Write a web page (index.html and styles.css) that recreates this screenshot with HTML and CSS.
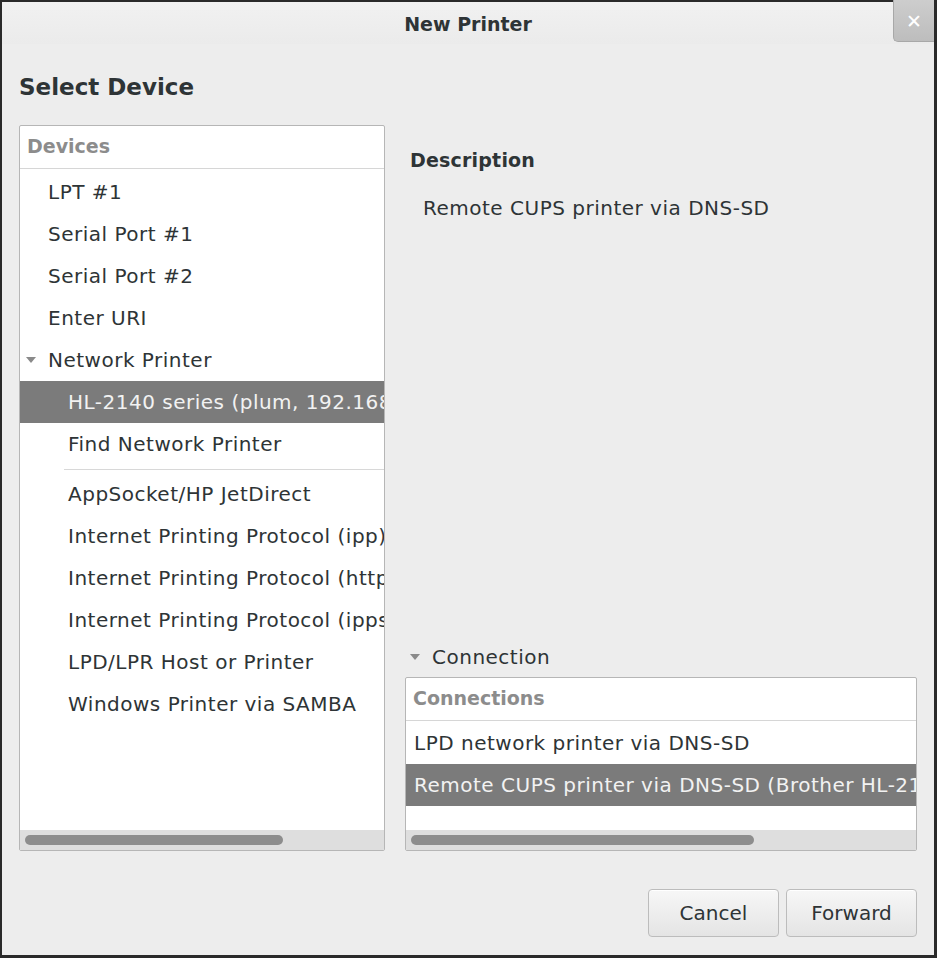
FILE: index.html
```html
<!DOCTYPE html>
<html lang="en">
<head>
    <meta charset="UTF-8">
    <title>New Printer</title>
    <link rel="stylesheet" href="styles.css">
</head>
<body>
    <div class="window">
        <div class="titlebar">
            <span class="title">New Printer</span>
            <div class="close">&#x2715;</div>
        </div>

        <div class="content">
            <h1 class="page-title">Select Device</h1>

            <div class="main">
                <!-- device tree -->
                <div class="listbox devices">
                    <div class="list-head">Devices</div>
                    <div class="list-body">
                        <div class="row">LPT #1</div>
                        <div class="row">Serial Port #1</div>
                        <div class="row">Serial Port #2</div>
                        <div class="row">Enter URI</div>
                        <div class="row parent"><span class="arrow"></span>Network Printer</div>
                        <div class="row child selected">HL-2140 series (plum, 192.168.0.4)</div>
                        <div class="row child">Find Network Printer</div>
                        <div class="separator"></div>
                        <div class="row child">AppSocket/HP JetDirect</div>
                        <div class="row child">Internet Printing Protocol (ipp)</div>
                        <div class="row child">Internet Printing Protocol (https)</div>
                        <div class="row child">Internet Printing Protocol (ipps)</div>
                        <div class="row child">LPD/LPR Host or Printer</div>
                        <div class="row child">Windows Printer via SAMBA</div>
                    </div>
                    <div class="hscroll"><div class="thumb" style="width: 258px"></div></div>
                </div>

                <div class="side">
                    <h2 class="section">Description</h2>
                    <p class="desc">Remote CUPS printer via DNS-SD</p>

                    <div class="spacer"></div>

                    <div class="expander"><span class="arrow"></span>Connection</div>
                    <div class="listbox connections">
                        <div class="list-head">Connections</div>
                        <div class="list-body">
                            <div class="row">LPD network printer via DNS-SD</div>
                            <div class="row selected">Remote CUPS printer via DNS-SD (Brother HL-2140 series)</div>
                        </div>
                        <div class="hscroll"><div class="thumb" style="width: 343px"></div></div>
                    </div>
                </div>
            </div>

            <div class="buttons">
                <button class="btn">Cancel</button>
                <button class="btn">Forward</button>
            </div>
        </div>
    </div>
</body>
</html>
```

FILE: styles.css
```css
* {
    box-sizing: border-box;
}
body {
    margin: 0;
    background: #2a2a2a;
    font-family: "DejaVu Sans", sans-serif;
    color: #2e3436;
}
.window {
    width: 937px;
    height: 958px;
    border: 2px solid #2a2a2a;
    border-width: 2px 3px 3px 2px;
    background: #ededed;
    display: flex;
    flex-direction: column;
}

/* title bar */
.titlebar {
    position: relative;
    height: 42px;
    flex: none;
    display: flex;
    align-items: center;
    justify-content: center;
    background: linear-gradient(#f1f1f1, #ebebeb);
}
.title {
    font-weight: bold;
    font-size: 19px;
    margin-top: 2px;
}
.close {
    position: absolute;
    top: -2px;
    right: 0;
    width: 41px;
    height: 42px;
    background: linear-gradient(#cdcdcd, #bdbdbd);
    border: 1px solid #a8a8a8;
    border-top: none;
    border-right: none;
    border-bottom-left-radius: 5px;
    color: #fff;
    font-weight: bold;
    font-size: 19px;
    display: flex;
    align-items: center;
    justify-content: center;
}

.content {
    flex: 1;
    display: flex;
    flex-direction: column;
    padding: 0 17px 18px 17px;
}
.page-title {
    font-size: 23px;
    font-weight: bold;
    margin: 29px 0 0 0;
    line-height: 28px;
    height: 52px;
}

.main {
    display: flex;
    gap: 20px;
    height: 726px;
}

/* list boxes */
.listbox {
    background: #fff;
    border: 1px solid #b6b6b6;
    border-radius: 2px;
    display: flex;
    flex-direction: column;
    overflow: hidden;
}
.devices {
    width: 366px;
    flex: none;
}
.list-head {
    height: 43px;
    flex: none;
    border-bottom: 1px solid #d6d6d6;
    color: #8c8c8c;
    font-weight: bold;
    font-size: 19px;
    padding: 9px 0 0 7px;
}
.list-body {
    flex: 1;
    padding-top: 2px;
}
.row {
    height: 42px;
    line-height: 42px;
    font-size: 20px;
    letter-spacing: 0.5px;
    padding-left: 28px;
    white-space: nowrap;
    overflow: hidden;
}
.row.child {
    padding-left: 48px;
}
.row.parent {
    padding-left: 6px;
}
.row.selected {
    background: #7b7b7b;
    color: #f2f2f2;
}
.separator {
    height: 8px;
    margin-left: 44px;
    border-top: 4px solid transparent;
    background: linear-gradient(#d8d8d8, #d8d8d8) no-repeat 0 0 / 100% 1px;
}
.arrow {
    display: inline-block;
    width: 0;
    height: 0;
    border-left: 5px solid transparent;
    border-right: 5px solid transparent;
    border-top: 6px solid #8a8a8a;
    margin: 0 12px 3px 0;
    vertical-align: middle;
}

.hscroll {
    height: 20px;
    flex: none;
    background: #dedede;
    padding: 5px 0 0 5px;
}
.thumb {
    height: 10px;
    border-radius: 5px;
    background: #8d8d8d;
}

/* right column */
.side {
    flex: 1;
    min-width: 0;
    display: flex;
    flex-direction: column;
}
.section {
    font-size: 19px;
    font-weight: bold;
    letter-spacing: 0.2px;
    margin: 23px 0 0 5px;
    line-height: 24px;
}
.desc {
    margin: 24px 0 0 18px;
    font-size: 20px;
    letter-spacing: 0.5px;
}
.spacer {
    flex: 1;
}
.expander {
    font-size: 20px;
    letter-spacing: 0.5px;
    padding-left: 5px;
    height: 32px;
}
.connections {
    height: 174px;
    flex: none;
}
.connections .row {
    padding-left: 8px;
}
.connections .list-body {
    padding-top: 1px;
}

/* dialog buttons */
.buttons {
    display: flex;
    justify-content: flex-end;
    gap: 7px;
    margin-top: 38px;
}
.btn {
    width: 131px;
    height: 48px;
    font-family: "DejaVu Sans", sans-serif;
    font-size: 20px;
    color: #2e3436;
    border: 1px solid #bcbcbc;
    border-radius: 4px;
    background: linear-gradient(#f7f7f7, #e4e4e4);
    box-shadow: 0 1px 0 #fff inset;
}
```
